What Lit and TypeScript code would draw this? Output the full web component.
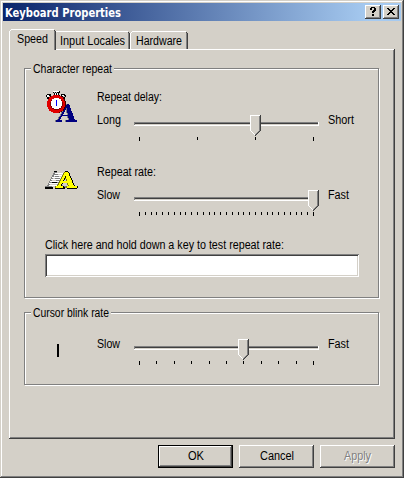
import { LitElement, html, svg, css } from "lit";
import { customElement, property } from "lit/decorators.js";

const textStyles = css`
  svg { display: block; overflow: visible; flex: none; }
  text { font-family: "Liberation Sans", Arial, sans-serif; font-size: 12px; fill: #000; }
`;

/* One line of interface text, set to a given width, with its baseline 11px down. */
const label = (text: string, width: number, cls = "") => html`
  <svg class="label ${cls}" width=${width} height="13">
    <text x="0" y="11" textLength=${width} lengthAdjust="spacingAndGlyphs">${text}</text>
  </svg>`;

@customElement("win-tab")
class WinTab extends LitElement {
  @property() text = "";
  @property({ type: Number }) width = 50;
  @property({ type: Number }) textX = 8;
  @property({ type: Number }) textWidth = 30;
  @property({ type: Boolean }) selected = false;
  @property({ type: Boolean }) joined = false;

  static styles = [textStyles, css`:host { display: block; flex: none; }`];

  render() {
    const w = this.width;
    const h = this.selected ? 21 : 18;
    return html`
      <svg width=${w} height=${h} shape-rendering="crispEdges">
        <path fill="#d4d0c8" d="M0 2h1v-1h1v-1H${w - 2}v1h1v1h1V${h}H0z" />
        <path fill="#fff" d=${this.joined ? `M0 0H${w - 2}v1H0z` : `M2 0H${w - 2}v1H2z M1 1h1v1h-1z M0 2h1V${h}H0z`} />
        <path fill="#808080" d="M${w - 2} 2h1V${h}h-1z" />
        <path fill="#404040" d="M${w - 2} 1h1v1h-1z M${w - 1} 2h1V${h}h-1z" />
        <text x=${this.textX} y="14" textLength=${this.textWidth} lengthAdjust="spacingAndGlyphs">${this.text}</text>
      </svg>`;
  }
}

@customElement("win-slider")
class WinSlider extends LitElement {
  @property({ type: Number }) steps = 4;
  @property({ type: Number }) value = 0;

  static styles = [textStyles, css`:host { display: block; flex: none; margin-top: 2px; }`];

  render() {
    const last = this.steps - 1;
    const at = (i: number) => 5 + Math.round((i * 174) / last);
    const x = at(this.value) - 5;
    return html`
      <svg width="185" height="26" shape-rendering="crispEdges">
        <rect x="0" y="7" width="185" height="4" fill="#fff" />
        <rect x="0" y="7" width="184" height="3" fill="#808080" />
        <rect x="1" y="8" width="183" height="2" fill="#d4d0c8" />
        <rect x="1" y="8" width="183" height="1" fill="#404040" />
        ${Array.from({ length: this.steps }, (_, i) => svg`
          <rect x=${at(i)} y="22" width="1" height=${i === 0 || i === last ? 4 : 3} fill="#000" />`)}
        <g transform="translate(${x} 0)">
          <path fill="#d4d0c8" d="M0 0H11V16H10V17H9V18H8V19H7V20H6V21H5V20H4V19H3V18H2V17H1V16H0z" />
          <path fill="#fff" d="M0 0H10V1H1V16H2V17H3V18H4V19H5V20H4V19H3V18H2V17H1V16H0z" />
          <path fill="#808080" d="M9 1H10V16H9V17H8V18H7V19H6V20H5V19H6V18H7V17H8V16H9z" />
          <path fill="#404040" d="M10 0H11V16H10V17H9V18H8V19H7V20H6V21H5V20H6V19H7V18H8V17H9V16H10z" />
        </g>
      </svg>`;
  }
}

const navyA = "M22 14h2l6 16h2v2h-11v-2h3l-1-4h-6l-2 4h2v2h-6v-2h2z M21.5 18l-3.500 7h5z";

const delayIcon = html`
  <svg width="32" height="32" shape-rendering="crispEdges">
    <path fill="#808080" fill-rule="evenodd" transform="translate(-1 0)" d=${navyA} />
    <path fill="#000080" fill-rule="evenodd" d=${navyA} />
    <path fill="#000" d="M8 1h7v2h-1v2h-5v-2h-1z M2 4h4v3h-1v2h-3v-2h-1v-2h1z M16 4h4v1h1v2h-1v2h-2v-2h-2z" />
    <path fill="#fff" d="M8 1h6v1h-6z M10 3h1v2h-1z M12 3h1v2h-1z M2 5h2v2h-2z M17 5h2v1h-2z" />
    <path fill="#c0c0c0" d="M9 2h1v1h-1z M11 2h1v1h-1z M4 6h1v1h-1z M18 6h2v1h-2z" />
    <path fill="#400000" d="M8 5h7v1h2v1h2v2h1v2h1v6h-1v2h-1v2h-2v1h-2v1h-7v-1h-2v-1h-2v-2h-1v-2h-1v-6h1v-2h1v-2h2v-1h2z" />
    <path fill="#e00000" d="M8 5h6v1h2v1h2v2h1v2h1v6h-1v2h-1v2h-2v1h-2v1h-6v-1h-2v-1h-2v-2h-1v-2h-1v-6h1v-2h1v-2h2v-1h2z" />
    <path fill="#800000" d="M9 8h5v1h2v1h1v2h1v4h-1v2h-1v1h-2v1h-5v-1h-2v-1h-1v-2h-1v-4h1v-2h1v-1h2z" />
    <path fill="#fff" d="M9 8h5v1h2v2h1v5h-1v2h-2v1h-5v-1h-2v-2h-1v-5h1v-2h2z" />
    <path fill="#0000ff" d="M11 10h1v6h-1z" />
  </svg>`;

const serifA = "M20 7h3l6 14h3v2h-10v-2h2l-1-3h-6l-1 3h2v2h-7v-2h2z M20.500 11l-2.500 5h4z";

const rateIcon = html`
  <svg width="32" height="32" shape-rendering="crispEdges">
    <path fill="#808080" fill-rule="evenodd" transform="translate(-11 0)" d=${serifA} />
    <path fill="#fff" d="M10 8h8v1h-8z M9 10h9v1h-9z M7 12h11v1h-11z M6 14h10v1h-10z M5 16h10v1h-10z M4 18h10v1h-10z M4 20h9v1h-9z" />
    <path fill="#000" d="M9 6h3v1h-3z M0 22h8v2h-8z M10 22h10v2h-10z M7 17h5v1h-5z" />
    <path fill="#808000" fill-rule="evenodd" transform="translate(-1 0)" d=${serifA} />
    <path fill="#000" d="M20 6h3v1h-3z" />
    <path fill="#000" fill-rule="evenodd" transform="translate(1 0)" d=${serifA} />
    <path fill="#000" d="M11 23h8v1h-8z M22 23h10v1h-10z" />
    <path fill="#ffff00" fill-rule="evenodd" d=${serifA} />
  </svg>`;

@customElement("app-root")
class AppRoot extends LitElement {
  static styles = [textStyles, css`
    :host {
      display: flex; flex-direction: column; box-sizing: border-box;
      width: 404px; height: 478px; padding: 3px; background: #d4d0c8;
      box-shadow: inset -1px -1px #404040, inset 1px 1px #d4d0c8, inset -2px -2px #808080, inset 2px 2px #fff;
    }
    .title {
      display: flex; align-items: center; height: 18px; flex: none; box-sizing: border-box;
      padding: 0 2px; gap: 2px; background: linear-gradient(to right, #0a246a, #a6caf0 92%);
    }
    .title .name { margin-right: auto; }
    .title text { font-family: "DejaVu Sans", sans-serif; font-weight: bold; font-size: 11.5px; fill: #fff; }
    .raised {
      background: #d4d0c8;
      box-shadow: inset -1px -1px #404040, inset 1px 1px #fff, inset -2px -2px #808080;
    }
    .tool { width: 16px; height: 14px; }
    .tabs { display: flex; align-items: flex-end; height: 20px; margin: 8px 0 0 6px; flex: none; }
    .tabs .front { align-self: flex-start; position: relative; z-index: 1; }
    .panel {
      width: 386px; height: 390px; box-sizing: border-box; margin-left: 6px; flex: none;
      padding: 19px 0 0 15px; display: flex; flex-direction: column; gap: 14px;
      box-shadow: inset -1px -1px #404040, inset 1px 0 #fff, inset 0 1px #fff, inset -2px -2px #808080;
    }
    .group {
      width: 355px; box-sizing: border-box; border: 1px solid #808080; flex: none;
      box-shadow: 1px 1px #fff, inset 1px 1px #fff;
    }
    .repeat { height: 230px; }
    .blink { height: 73px; }
    .legend { width: fit-content; margin: -7px 0 0 6px; padding: 0 2px 0 2px; background: #d4d0c8; }
    .setting { display: flex; margin: 15px 0 0 20px; gap: 20px; }
    .setting.second { margin-top: 24px; }
    .setting.third { margin-top: 18px; }
    .line { display: flex; height: 28px; }
    .setting .heading { margin-bottom: 10px; }
    .low { width: 37px; flex: none; }
    .high { margin-left: 9px; }
    .test { margin: 22px 0 0 20px; }
    .field {
      box-sizing: border-box; width: 314px; height: 23px; margin-top: 3px; background: #fff;
      box-shadow: inset 1px 1px #808080, inset -1px -1px #fff, inset 2px 2px #404040, inset -2px -2px #d4d0c8;
    }
    .caretbox { width: 32px; padding: 7px 0 0 12px; box-sizing: border-box; }
    .caret { width: 2px; height: 13px; background: #000; }
    .buttons { display: flex; justify-content: flex-end; gap: 6px; margin: 6px 6px 0 0; }
    .button { width: 75px; height: 23px; box-sizing: border-box; display: flex; justify-content: center; padding-top: 4px; }
    .default { border: 1px solid #000; padding-top: 3px; }
    .disabled text { fill: #808080; text-shadow: 1px 1px #fff; }
  `];

  render() {
    return html`
      <div class="title">
        ${label("Keyboard Properties", 116, "name")}
        <div class="raised tool">
          <svg width="16" height="14" shape-rendering="crispEdges">
            <path d="M6 2h4v1h1v3h-1v1h-1v1h-2v-2h1v-1h1v-2h-2v2h-2v-2h1z M7 9h2v2h-2z" />
          </svg>
        </div>
        <div class="raised tool">
          <svg width="16" height="14" shape-rendering="crispEdges">
            <path d="M4 3h2v1h1v1h2v-1h1v-1h2v1h-1v1h-1v1h-1v1h1v1h1v1h1v1h-2v-1h-1v-1h-2v1h-1v1h-2v-1h1v-1h1v-1h1v-1h-1v-1h-1v-1h-1z" />
          </svg>
        </div>
      </div>

      <div class="tabs">
        <win-tab class="front" text="Speed" width="47" textX="8" textWidth="31" selected></win-tab>
        <win-tab text="Input Locales" width="74" textX="4" textWidth="65" joined></win-tab>
        <win-tab text="Hardware" width="58" textX="6" textWidth="46"></win-tab>
      </div>

      <div class="panel">
        <div class="group repeat">
          <div class="legend">${label("Character repeat", 79)}</div>
          <div class="setting">
            ${delayIcon}
            <div>
              ${label("Repeat delay:", 65, "heading")}
              <div class="line">
                <div class="low">${label("Long", 24)}</div>
                <win-slider steps="4" value="2"></win-slider>
                ${label("Short", 26, "high")}
              </div>
            </div>
          </div>
          <div class="setting second">
            ${rateIcon}
            <div>
              ${label("Repeat rate:", 59, "heading")}
              <div class="line">
                <div class="low">${label("Slow", 23)}</div>
                <win-slider steps="31" value="30"></win-slider>
                ${label("Fast", 21, "high")}
              </div>
            </div>
          </div>
          <div class="test">
            ${label("Click here and hold down a key to test repeat rate:", 239)}
            <div class="field"></div>
          </div>
        </div>

        <div class="group blink">
          <div class="legend">${label("Cursor blink rate", 76)}</div>
          <div class="setting third">
            <div class="caretbox"><div class="caret"></div></div>
            <div class="line">
              <div class="low">${label("Slow", 23)}</div>
              <win-slider steps="11" value="6"></win-slider>
              ${label("Fast", 21, "high")}
            </div>
          </div>
        </div>
      </div>

      <div class="buttons">
        <div class="button raised default">${label("OK", 16)}</div>
        <div class="button raised">${label("Cancel", 34)}</div>
        <div class="button raised disabled">${label("Apply", 27)}</div>
      </div>`;
  }
}
